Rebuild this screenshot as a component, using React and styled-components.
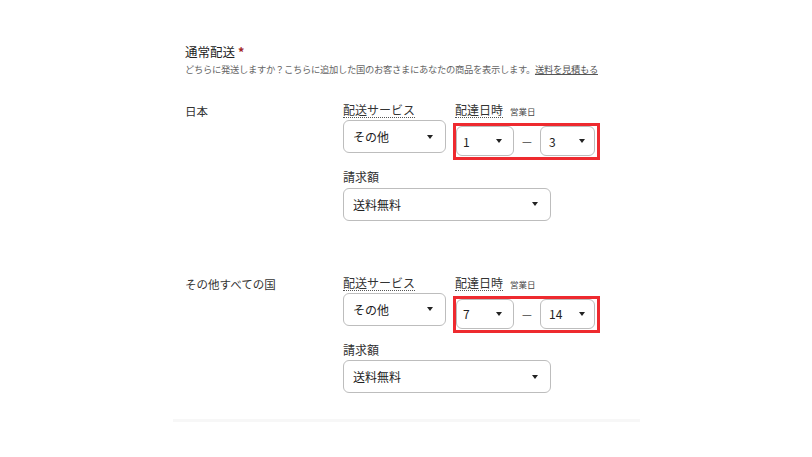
import React from 'react'
import styled, { createGlobalStyle } from 'styled-components'

const GlobalStyle = createGlobalStyle`
  body {
    margin: 0;
    background: #fff;
    font-family: "Noto Sans CJK JP", "Noto Sans", sans-serif;
    color: #222;
  }
`

const regions = [
  { name: '日本', min: '1', max: '3' },
  { name: 'その他すべての国', min: '7', max: '14' }
]

const Page = styled.div`
  width: 812px;
  height: 457px;
  padding: 43px 0 0 173px;
  box-sizing: border-box;
`

const Section = styled.section`
  width: 467px;
  padding-bottom: 26px;
  border-bottom: 3px solid #f7f7f7;
`

const Head = styled.div`
  padding-left: 12px;
  margin-bottom: 26px;
`

const Title = styled.h3`
  margin: 0;
  font-size: 12.5px;
  font-weight: 400;
  line-height: 18px;
  color: #222;
`

const Star = styled.span`
  color: #a4282a;
  font-weight: 700;
  margin-left: 3px;
`

const Sub = styled.p`
  margin: 1px 0 0;
  font-size: 9.3px;
  line-height: 14px;
  color: #666;
  letter-spacing: -0.3px;
`

const Link = styled.a`
  color: #555;
  text-decoration: underline;
`

const Row = styled.div`
  display: flex;
  padding-left: 12px;
  & + & {
    margin-top: 54px;
  }
`

const Country = styled.div`
  width: 158px;
  font-size: 11.5px;
  line-height: 16px;
  color: #333;
  padding-top: 1px;
`

const Fields = styled.div`
  display: flex;
  flex-direction: column;
`

const FieldLine = styled.div`
  display: flex;
  gap: 7px;
  & + & {
    margin-top: 9px;
  }
`

const Field = styled.div`
  display: flex;
  flex-direction: column;
  align-items: flex-start;
`

const Label = styled.span`
  font-size: 12px;
  line-height: 15px;
  color: #333;
  border-bottom: ${p => (p.$dotted ? '1.5px dotted #555' : '0')};
  padding-bottom: ${p => (p.$dotted ? '0' : '1.5px')};
  margin: 0 0 2px ${p => p.$indent || 0}px;
`

const Hint = styled.span`
  font-size: 8.5px;
  color: #444;
  margin-left: 7px;
`

const LabelLine = styled.div`
  display: flex;
  align-items: baseline;
`

const Select = styled.div`
  width: ${p => p.$w}px;
  height: ${p => p.$h || 33}px;
  box-sizing: border-box;
  border: 1px solid #bdbdbd;
  border-radius: 6px;
  display: flex;
  align-items: center;
  justify-content: space-between;
  padding: 0 ${p => p.$pr || 12}px 0 ${p => p.$pl || 9}px;
  font-size: 12px;
  color: #222;
  background: #fff;
`

const Arrow = styled.span`
  width: 0;
  height: 0;
  border-left: 3.5px solid transparent;
  border-right: 3.5px solid transparent;
  border-top: 4.5px solid #222;
`

const Highlight = styled.div`
  display: flex;
  align-items: center;
  margin-top: 3px;
  padding: 0 2px 1px 0;
  border: 3px solid #ee2a2f;
`

const Dash = styled.span`
  width: 26px;
  text-align: center;
  font-size: 11px;
  color: #444;
`

function Dropdown({ value, w, h, pl, pr }) {
  return (
    <Select $w={w} $h={h} $pl={pl} $pr={pr}>
      <span>{value}</span>
      <Arrow />
    </Select>
  )
}

export default function App() {
  return (
    <Page>
      <GlobalStyle />
      <Section>
        <Head>
          <Title>通常配送<Star>*</Star></Title>
          <Sub>
            どちらに発送しますか？こちらに追加した国のお客さまにあなたの商品を表示します。<Link>送料を見積もる</Link>
          </Sub>
        </Head>
        {regions.map(r => (
          <Row key={r.name}>
            <Country>{r.name}</Country>
            <Fields>
              <FieldLine>
                <Field>
                  <Label $dotted>配送サービス</Label>
                  <Dropdown value="その他" w={103} />
                </Field>
                <Field>
                  <LabelLine>
                    <Label $dotted $indent={2}>配達日時</Label>
                    <Hint>営業日</Hint>
                  </LabelLine>
                  <Highlight>
                    <Dropdown value={r.min} w={58} h={30} pl={6} pr={11} />
                    <Dash>—</Dash>
                    <Dropdown value={r.max} w={55} h={30} pl={8} pr={9} />
                  </Highlight>
                </Field>
              </FieldLine>
              <FieldLine>
                <Field>
                  <Label>請求額</Label>
                  <Dropdown value="送料無料" w={208} />
                </Field>
              </FieldLine>
            </Fields>
          </Row>
        ))}
      </Section>
    </Page>
  )
}
